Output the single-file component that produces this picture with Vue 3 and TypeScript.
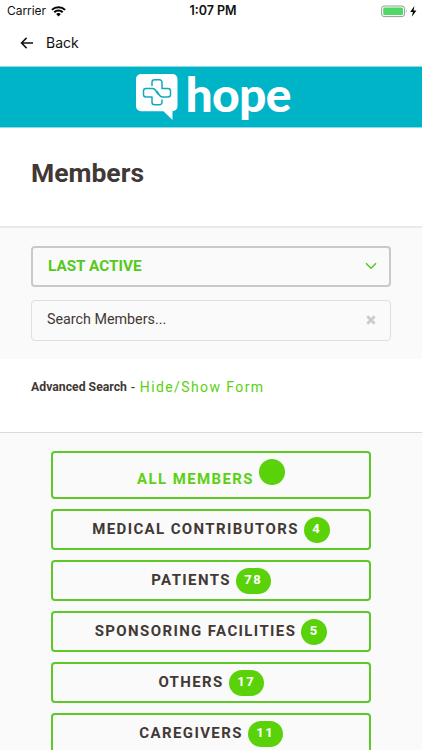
<script setup lang="ts">
interface MemberType {
  label: string
  count: string
  active?: boolean
}

const memberTypes: MemberType[] = [
  { label: 'ALL MEMBERS', count: '', active: true },
  { label: 'MEDICAL CONTRIBUTORS', count: '4' },
  { label: 'PATIENTS', count: '78' },
  { label: 'SPONSORING FACILITIES', count: '5' },
  { label: 'OTHERS', count: '17' },
  { label: 'CAREGIVERS', count: '11' },
]
</script>

<template>
  <div class="screen">
    <header class="status">
      <div class="carrier">
        <span>Carrier</span>
        <svg width="15" height="11" viewBox="0 0 15 11">
          <path d="M.9 3.9a9.4 9.4 0 0 1 13.2 0M3.3 6.2a6 6 0 0 1 8.4 0" fill="none" stroke="#000" stroke-width="2" />
          <path d="M5.1 8.1a3.4 3.4 0 0 1 4.8 0L7.5 10.6z" />
        </svg>
      </div>
      <div class="clock">1:07 PM</div>
      <div class="power">
        <svg width="38" height="13" viewBox="0 0 38 13">
          <rect x=".6" y="1" width="23" height="10.6" rx="2.6" fill="#fff" stroke="#999" />
          <rect x="2.2" y="2.6" width="19.8" height="7.4" rx="1.2" fill="#4cd964" />
          <path d="M25 4.6q1.4 1.7 0 3.4z" fill="#999" />
          <path d="M33.4 1L29.2 7h2.7l-1 4.8L35.4 5.4h-2.8z" fill="#000" />
        </svg>
      </div>
    </header>

    <nav class="back">
      <svg width="14" height="12" viewBox="0 0 14 12" fill="none" stroke="#111" stroke-width="1.5">
        <path d="M13 6H1.6M6.6.9L1.5 6l5.1 5.1" />
      </svg>
      <span>Back</span>
    </nav>

    <div class="brand">
      <svg width="48" height="60" viewBox="0 0 48 60">
        <path d="M10 7h31.500a5 5 0 0 1 5 5v27.200a5 5 0 0 1-5 5v8.800L32.500 44.200H10a5 5 0 0 1-5-5V12a5 5 0 0 1 5-5z" fill="#fff" />
        <g fill="none" stroke="#12a9bd" stroke-width="1.500" stroke-linejoin="round" stroke-linecap="round">
          <path d="M21 18.500v-3.300a2.500 2.500 0 0 1 2.500-2.500h5a2.500 2.500 0 0 1 2.500 2.500v6.400h6a2.500 2.500 0 0 1 2.500 2.500v3.300a2.500 2.500 0 0 1-2.500 2.500h-5.600c-1.800 0-2.400-.8-3.100-1.900l-2.300-3.600" />
          <path d="M31 32.900v2.300a2.500 2.500 0 0 1-2.500 2.500h-5a2.500 2.500 0 0 1-2.500-2.500v-5.300h-6a2.500 2.500 0 0 1-2.500-2.500v-3.300a2.500 2.500 0 0 1 2.500-2.500h6.500c1.800 0 2.500.8 3.200 1.900l2.100 3.300" />
        </g>
      </svg>
      <span class="wordmark">hope</span>
    </div>

    <div class="heading"><h1>Members</h1></div>

    <section class="filters">
      <div class="select">
        <span>LAST ACTIVE</span>
        <svg width="12" height="8" viewBox="0 0 12 8" fill="none" stroke="#55c91b" stroke-width="1.500">
          <path d="M1 1.200l5 5 5-5" />
        </svg>
      </div>
      <div class="search">
        <span>Search Members...</span>
        <svg width="10" height="10" viewBox="0 0 10 10" stroke="#c9cccc" stroke-width="2.700">
          <path d="M1.300 1.300l7.400 7.400M8.700 1.300L1.300 8.700" />
        </svg>
      </div>
    </section>

    <section class="advanced">
      <strong>Advanced Search</strong>
      <span class="dash">-</span>
      <a>Hide/Show Form</a>
    </section>

    <section class="types">
      <div v-for="t in memberTypes" :key="t.label" class="type" :class="{ active: t.active }">
        <span class="label">{{ t.label }}</span>
        <span class="badge">{{ t.count }}</span>
      </div>
    </section>
  </div>
</template>

<style>
body {
  margin: 0;
  background: #fff;
  overflow: hidden;
}
</style>

<style scoped>
* {
  box-sizing: border-box;
}
.screen {
  width: 422px;
  height: 750px;
  overflow: hidden;
  background: #fff;
  color: #423835;
  font-family: Roboto, sans-serif;
}
svg {
  display: block;
  flex: none;
}
.status {
  display: grid;
  grid-template-columns: 1fr auto 1fr;
  align-items: center;
  height: 22px;
  padding: 0 3px 0 7px;
  color: #111;
  font: 12px/22px Inter, sans-serif;
}
.carrier {
  display: flex;
  align-items: center;
  gap: 5px;
  letter-spacing: -0.05px;
}
.clock {
  font-weight: 600;
  font-size: 12.500px;
}
.power {
  display: flex;
  justify-content: flex-end;
}
.back {
  display: flex;
  align-items: center;
  gap: 12px;
  height: 44px;
  padding: 0 0 2px 20px;
  color: #111;
  font: 14px/20px Inter, sans-serif;
}
.brand {
  display: flex;
  height: 62px;
  padding-left: 131px;
  background: #00b4c8;
  border: solid #8fdce5;
  border-width: 1px 0;
}
.wordmark {
  margin-left: 6.500px;
  color: #fff;
  font: 900 48px/54px Lato, sans-serif;
  letter-spacing: -0.700px;
}
.heading {
  display: flex;
  height: 100px;
  padding: 29px 31px;
  border-bottom: 2px solid #e9e9e9;
}
h1 {
  margin: 0;
  font-size: 26.500px;
  line-height: 32px;
  font-weight: 700;
}
.filters {
  display: flex;
  flex-direction: column;
  gap: 13px;
  height: 131px;
  padding: 18px 31px;
  background: #fafafa;
}
.select,
.search {
  display: flex;
  align-items: center;
  justify-content: space-between;
  height: 41px;
  flex: none;
  border: 2px solid #c9c9c9;
  border-radius: 4px;
  padding: 0 12px 1px 15px;
}
.select {
  color: #55c91b;
  font-size: 15.300px;
  font-weight: 700;
}
.search {
  border: 1.500px solid #dedede;
  padding: 0 14px 3px 15px;
  font-size: 14.300px;
}
.search svg {
  margin-top: 1px;
}
.advanced {
  display: flex;
  align-items: baseline;
  height: 74px;
  padding: 17px 31px 0;
  border-bottom: 1px solid #dadada;
  line-height: 22px;
}
.advanced strong {
  position: relative;
  top: -1px;
  font-size: 12.250px;
}
.dash {
  margin: 0 5px 0 4px;
  font-size: 14px;
}
.advanced a {
  color: #5cd012;
  font-size: 14px;
  letter-spacing: 1.400px;
}
.types {
  display: flex;
  flex-direction: column;
  gap: 10px;
  height: 318px;
  padding: 18px 51px 0;
  background: #fafafa;
}
.type {
  display: flex;
  justify-content: center;
  align-items: flex-start;
  gap: 5px;
  height: 41px;
  flex: none;
  padding-top: 6px;
  border: 2px solid #5cc926;
  border-radius: 4px;
}
.label {
  padding-top: 2px;
  font-size: 15px;
  font-weight: 700;
  line-height: 20px;
  letter-spacing: 1.380px;
}
.badge {
  min-width: 26px;
  height: 26px;
  padding: 0 8.500px;
  border-radius: 13px;
  background: #5ad20a;
  color: #fff;
  text-align: center;
  font-size: 13px;
  font-weight: 700;
  line-height: 24px;
  letter-spacing: 1.500px;
}
.active {
  height: 48px;
  color: #5cd012;
}
.active .label {
  padding-top: 10px;
}
</style>
